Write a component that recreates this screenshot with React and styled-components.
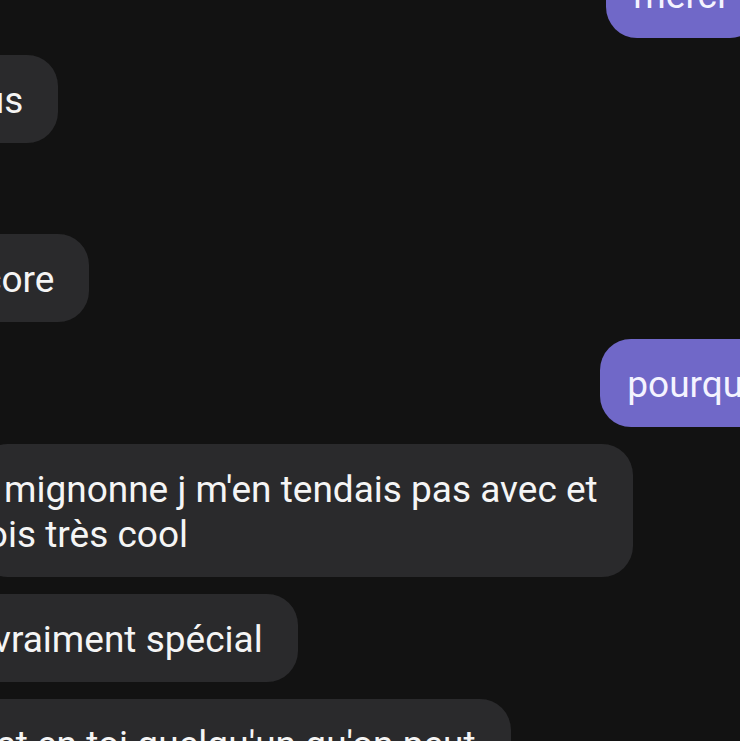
import React from "react";
import styled, { createGlobalStyle } from "styled-components";

const Global = createGlobalStyle`
  html, body {
    margin: 0;
    padding: 0;
    background: #121212;
    overflow: hidden;
  }
  #root {
    width: 740px;
    height: 741px;
    overflow: hidden;
    background: #121212;
  }
`;

const Thread = styled.main`
  display: flex;
  flex-direction: column;
  gap: 17px;
  width: 740px;
  margin-top: -50px;
  font-family: Roboto, "Noto Sans", "Liberation Sans", sans-serif;
`;

const Row = styled.div`
  display: flex;
  justify-content: ${(p) => (p.$mine ? "flex-end" : "flex-start")};
  margin-top: ${(p) => (p.$pause ? "74px" : "0")};
`;

const Bubble = styled.div`
  flex: none;
  box-sizing: border-box;
  padding: 23px 35px 20px 27px;
  border-radius: 31px;
  background: ${(p) => (p.$mine ? "#7068c8" : "#2a2a2c")};
  color: ${(p) => (p.$mine ? "#f4f3ff" : "#f5f5f5")};
  font-size: 37px;
  line-height: 45px;
  white-space: nowrap;
  margin-left: ${(p) => (p.$mine ? 0 : -p.$hidden)}px;
  margin-right: ${(p) => (p.$mine ? -p.$hidden : 0)}px;
`;

const Line = styled.span`
  display: block;
  margin-left: ${(p) => p.$indent || 0}px;
`;

export default function App() {
  return (
    <>
      <Global />
      <Thread>
        <Row $mine>
          <Bubble $mine $hidden={21}>merci</Bubble>
        </Row>
        <Row>
          <Bubble $hidden={73}>plus</Bubble>
        </Row>
        <Row $pause>
          <Bubble $hidden={85}>encore</Bubble>
        </Row>
        <Row $mine>
          <Bubble $mine $hidden={95}>pourquoi ?</Bubble>
        </Row>
        <Row>
          <Bubble $hidden={23}>
            <Line>mignonne j m'en tendais pas avec et</Line>
            <Line $indent={-30}>fois très cool</Line>
          </Bubble>
        </Row>
        <Row>
          <Bubble $hidden={34}>vraiment spécial</Bubble>
        </Row>
        <Row>
          <Bubble $hidden={50}>est en toi quelqu'un qu'on peut</Bubble>
        </Row>
      </Thread>
    </>
  );
}
